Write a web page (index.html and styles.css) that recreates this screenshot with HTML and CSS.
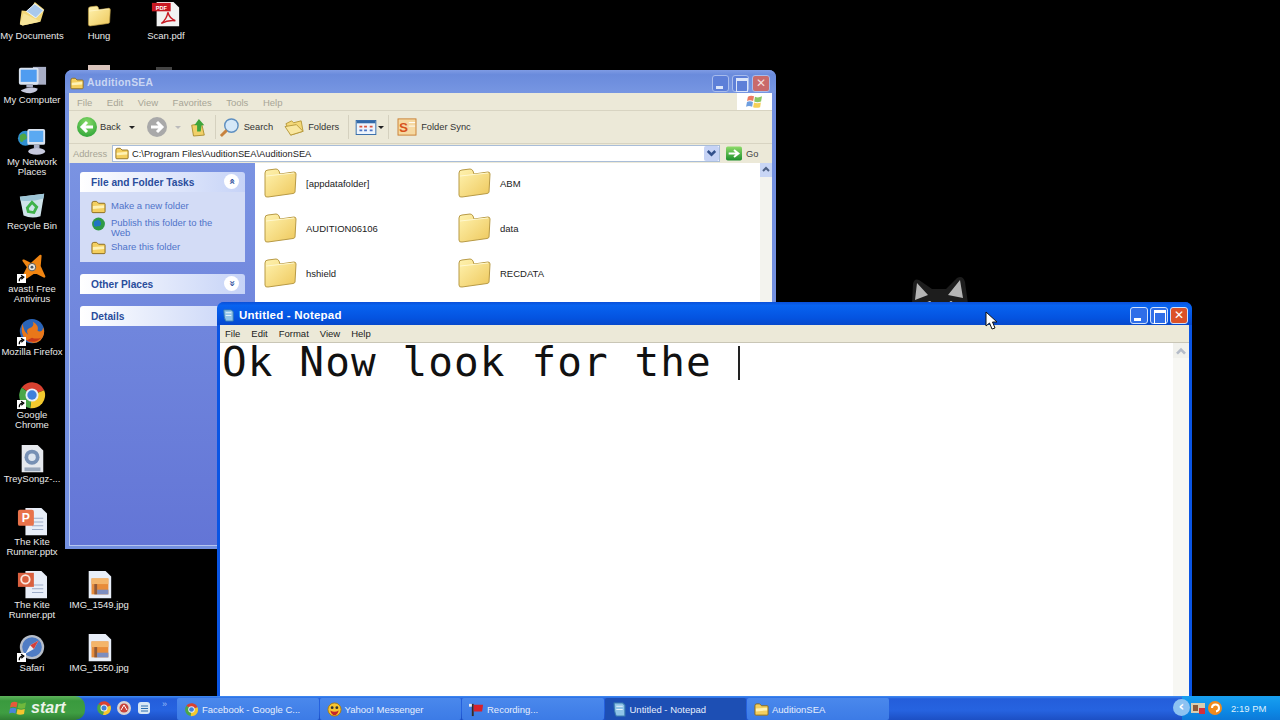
FILE: index.html
```html
<!DOCTYPE html>
<html lang="en">
<head>
<meta charset="utf-8">
<title>Windows XP desktop</title>
<link rel="stylesheet" href="styles.css">
</head>
<body>
<svg class="defs" width="0" height="0" aria-hidden="true">
  <defs>
    <linearGradient id="fg" x1="0" y1="0" x2="1" y2="1"><stop offset="0" stop-color="#fff3b0"/><stop offset="1" stop-color="#eec85c"/></linearGradient>
    <linearGradient id="gb" x1="0" y1="0" x2="0" y2="1"><stop offset="0" stop-color="#8edc6a"/><stop offset="1" stop-color="#1c8f2c"/></linearGradient>
    <symbol id="folder" viewBox="0 0 34 30">
      <path d="M2 5 Q2 2 5 2 L13 1 Q15 1 16 3 L17 6 L31 4 Q33 4 33 6 L32 24 Q32 25 30 25.500 L5 29 Q2 29.500 2 27 Z" fill="url(#fg)" stroke="#b89a45"/>
      <path d="M3 8 L31 5" stroke="#fff8d0" fill="none"/>
    </symbol>
    <symbol id="sfolder" viewBox="0 0 16 14">
      <path d="M1 3 Q1 1 3 1 L6 1 L8 3 L14 3 Q15 3 15 4 L15 12 Q15 13 14 13 L2 13 Q1 13 1 12 Z" fill="#f4cf5f" stroke="#8a6a1c"/>
      <path d="M2 6 L14 5 L14 8 L2 9 Z" fill="#fff2b5"/>
    </symbol>
    <symbol id="mydocs" viewBox="0 0 32 32">
      <path d="M3 24 L5 10 L13 11 L19 1 L29 9 L25 22 L6 26 Z" fill="#f2d777"/>
      <path d="M10 11 L19 3 L28 10 L20 18 Z" fill="#a9c9ec" stroke="#eef6ff"/>
      <path d="M3 25 L7 13 L21 20 L24 22 L6 26 Z" fill="#f7e59a"/>
    </symbol>
    <symbol id="pdf" viewBox="0 0 32 32">
      <path d="M6 1 L24 1 L30 7 L30 27 L6 27 Z" fill="#f1f1f1"/>
      <rect x="1" y="2" width="20" height="9" fill="#c81922"/>
      <text x="11" y="9.500" class="mini" text-anchor="middle">PDF</text>
      <path d="M11 24 Q17 19 18 12 Q20 19 26 21 Q18 20 11 24 Z" fill="none" stroke="#c81922" stroke-width="1.500"/>
    </symbol>
    <symbol id="computer" viewBox="0 0 32 32">
      <rect x="17" y="2" width="14" height="19" fill="#a8aec6"/>
      <rect x="2" y="3" width="21" height="18" rx="2" fill="#d9e2ef"/>
      <rect x="4" y="5" width="17" height="13" fill="#4f9cf0"/>
      <path d="M4 27 Q13 22 22 25 Q22 29 14 30 Q6 30 4 27 Z" fill="#c6c9dd"/>
      <rect x="10" y="21" width="7" height="3" fill="#aab0c8"/>
    </symbol>
    <symbol id="network" viewBox="0 0 32 32">
      <circle cx="9" cy="12" r="8" fill="#2f8fd0"/><path d="M3 9 Q8 5 10 9 Q12 13 7 14 Q5 18 3 14 Z" fill="#4fa746"/>
      <rect x="11" y="2" width="19" height="17" rx="2" fill="#d9e2ef"/>
      <rect x="13" y="4" width="15" height="12" fill="#5aa9f2"/>
      <rect x="18" y="19" width="6" height="4" fill="#aab0c8"/>
      <ellipse cx="21" cy="26" rx="9" ry="3.500" fill="#c6c9dd"/>
    </symbol>
    <symbol id="recycle" viewBox="0 0 32 32">
      <path d="M3 6 L29 3 L25 27 Q15 30 7 26 Z" fill="#cfe3ea"/>
      <path d="M3 6 L29 3 L28 8 Q15 12 4 10 Z" fill="#9dc5d6"/>
      <path d="M11 18 L16 12 L21 17 L18 23 L12 22 Z" fill="none" stroke="#3fb24a" stroke-width="3"/>
    </symbol>
    <symbol id="avast" viewBox="0 0 32 32">
      <path d="M6 26 L12 14 L7 7 L15 11 L25 2 L24 13 L29 24 L19 19 L10 25 Z" fill="#f08512" stroke="#f08512" stroke-width="2.500" stroke-linejoin="round"/>
      <circle cx="16" cy="14" r="4" fill="#ece6dc" stroke="#555"/>
      <circle cx="16" cy="14" r="1.500" fill="#456"/>
    </symbol>
    <symbol id="firefox" viewBox="0 0 32 32">
      <circle cx="16" cy="15" r="13" fill="#2a64b8"/>
      <path d="M6 7 Q3 17 9 24 Q17 31 25 25 Q31 19 28 11 Q27 17 22 15 Q24 9 17 5 Q19 10 13 12 Q9 14 12 19 Q7 16 6 7 Z" fill="#e9771a"/>
      <path d="M10 25 Q19 29 26 22 Q20 24 16 22 Z" fill="#c8381a"/>
    </symbol>
    <symbol id="chrome" viewBox="0 0 32 32">
      <path d="M16 16 L5 8 A14 14 0 0 1 29 11 Z" fill="#d94130"/>
      <path d="M16 16 L29 11 A14 14 0 0 1 14 30 Z" fill="#f3c92e"/>
      <path d="M16 16 L14 30 A14 14 0 0 1 5 8 Z" fill="#4aa648"/>
      <circle cx="16" cy="16" r="7" fill="#e8eef7"/><circle cx="16" cy="16" r="5" fill="#3f7fdc"/>
    </symbol>
    <symbol id="mp3" viewBox="0 0 32 32">
      <path d="M5 1 L22 1 L28 7 L28 30 L5 30 Z" fill="#e6e9ee"/>
      <circle cx="16" cy="14" r="8" fill="#7790b4"/><circle cx="16" cy="14" r="4" fill="#dfe6ef"/>
      <rect x="8" y="25" width="17" height="4" fill="#9aa8bc"/>
    </symbol>
    <symbol id="pptx" viewBox="0 0 32 32">
      <path d="M9 1 L26 1 L32 7 L32 30 L9 30 Z" fill="#e8eef8"/>
      <path d="M16 12 H28 M16 16 H28 M16 20 H28 M16 24 H28" stroke="#98a8c4"/>
      <rect x="1" y="3" width="17" height="17" rx="2" fill="#e8724a"/>
      <text x="9.500" y="16" class="ptxt" text-anchor="middle">P</text>
    </symbol>
    <symbol id="ppt" viewBox="0 0 32 32">
      <path d="M9 1 L26 1 L32 7 L32 30 L9 30 Z" fill="#e8eef8"/>
      <path d="M16 16 H28 M16 20 H28 M16 24 H28" stroke="#98a8c4"/>
      <rect x="1" y="3" width="17" height="15" fill="#d9603f"/>
      <circle cx="9" cy="10" r="4.500" fill="none" stroke="#fbe8df" stroke-width="2"/>
    </symbol>
    <symbol id="jpg" viewBox="0 0 32 32">
      <path d="M5 1 L23 1 L29 7 L29 30 L5 30 Z" fill="#e8eef8"/>
      <rect x="8" y="9" width="18" height="17" fill="#e88c3a"/>
      <rect x="8" y="9" width="18" height="6" fill="#f4b56a"/>
      <rect x="11" y="15" width="3" height="11" fill="#8e5a3a"/>
      <rect x="14" y="21" width="12" height="5" fill="#7c8dbf"/>
    </symbol>
    <symbol id="safari" viewBox="0 0 32 32">
      <circle cx="16" cy="15" r="13" fill="#b7bec9"/>
      <circle cx="16" cy="15" r="10.500" fill="#4f7cc4"/>
      <path d="M23 8 L18 17 L9 22 L14 13 Z" fill="#e6ebf2"/><path d="M23 8 L18 17 L14 13 Z" fill="#d4403a"/>
    </symbol>
    <symbol id="shortcut" viewBox="0 0 10 10">
      <rect width="10" height="10" fill="#fff"/><path d="M2.500 8 Q2.500 4 6 3.500 M4.500 1.500 L7.500 3.500 L4.800 5.800" fill="none" stroke="#000" stroke-width="1.400"/>
    </symbol>
    <symbol id="xpflag" viewBox="0 0 18 16">
      <path d="M2 3 Q5 1 8.500 2.500 L7.500 7.500 Q4 6 1 7.500 Z" fill="#e8593a"/>
      <path d="M9.500 3 Q13 4.500 17 2.500 L16 8 Q12 9.500 8.700 8 Z" fill="#6fb83c"/>
      <path d="M1 8.500 Q4 7 7.300 8.500 L6.500 13.500 Q3 12 0 13.500 Z" fill="#4a86d8"/>
      <path d="M8.500 9 Q12 10.500 15.800 9 L15 14 Q11 15.500 7.500 14 Z" fill="#f5c52f"/>
    </symbol>
    <symbol id="notepadico" viewBox="0 0 14 14">
      <path d="M2 1 L10 1 L12 3 L12 13 L4 13 Q2 10 2 1 Z" fill="#8fc4e8" stroke="#3d7fb0"/>
      <path d="M4 4 H10 M4 7 H10" stroke="#e6f4fc"/>
    </symbol>
    <symbol id="msgr" viewBox="0 0 16 16">
      <circle cx="8" cy="8" r="7" fill="#f7c531" stroke="#a87b12"/><circle cx="5.500" cy="6" r="1.500" fill="#333"/><circle cx="10.500" cy="6" r="1.500" fill="#333"/>
      <path d="M3.500 9 Q8 12 12.500 9 Q11 14 8 14 Q5 14 3.500 9 Z" fill="#c4262a"/>
    </symbol>
    <symbol id="flagrec" viewBox="0 0 16 16">
      <rect x="3" y="2" width="2" height="13" fill="#3a2a24"/><path d="M5 3 L15 3 L14 10 L5 10 Z" fill="#d8212b"/><rect x="0" y="2" width="3" height="3" fill="#eee"/>
    </symbol>
    <symbol id="glogo" viewBox="0 0 12 12"><circle cx="6" cy="6" r="5.500" fill="#2f9a46"/><path d="M2 4 Q6 1 8 4 Q9 8 5 8 Q3 9 2 7 Z" fill="#1f73c4"/></symbol>
  </defs>
</svg>

<main class="desktop">
  <div class="dicon c1 r-docs"><svg class="ico"><use href="#mydocs"/></svg><span>My Documents</span></div>
  <div class="dicon c2 r-docs"><svg class="ico hung"><use href="#folder"/></svg><span>Hung</span></div>
  <div class="dicon c3 r-docs"><svg class="ico"><use href="#pdf"/></svg><span>Scan.pdf</span></div>
  <div class="dicon c1 r-comp"><svg class="ico"><use href="#computer"/></svg><span>My Computer</span></div>
  <div class="dicon c1 r-net"><svg class="ico"><use href="#network"/></svg><span>My Network Places</span></div>
  <div class="dicon c1 r-bin"><svg class="ico"><use href="#recycle"/></svg><span>Recycle Bin</span></div>
  <div class="dicon c1 r-ava"><svg class="ico"><use href="#avast"/></svg><svg class="sc"><use href="#shortcut"/></svg><span>avast! Free Antivirus</span></div>
  <div class="dicon c1 r-fox"><svg class="ico"><use href="#firefox"/></svg><svg class="sc"><use href="#shortcut"/></svg><span>Mozilla Firefox</span></div>
  <div class="dicon c1 r-chr"><svg class="ico"><use href="#chrome"/></svg><svg class="sc"><use href="#shortcut"/></svg><span>Google Chrome</span></div>
  <div class="dicon c1 r-mp3"><svg class="ico"><use href="#mp3"/></svg><span>TreySongz-...</span></div>
  <div class="dicon c1 r-pptx"><svg class="ico"><use href="#pptx"/></svg><span>The Kite Runner.pptx</span></div>
  <div class="dicon c1 r-ppt"><svg class="ico"><use href="#ppt"/></svg><span>The Kite Runner.ppt</span></div>
  <div class="dicon c2 r-ppt"><svg class="ico"><use href="#jpg"/></svg><span>IMG_1549.jpg</span></div>
  <div class="dicon c1 r-saf"><svg class="ico"><use href="#safari"/></svg><svg class="sc"><use href="#shortcut"/></svg><span>Safari</span></div>
  <div class="dicon c2 r-saf"><svg class="ico"><use href="#jpg"/></svg><span>IMG_1550.jpg</span></div>

  <svg class="peek" viewBox="0 0 110 6"><rect x="22" width="22" height="6" fill="#d9c4bc"/><rect x="90" y="2" width="16" height="4" fill="#444"/></svg>

  <svg class="cat" viewBox="0 0 60 28">
    <path d="M2 28 L3 8 Q4 2 9 4 L22 13 L36 13 L47 2 Q53 -1 55 6 L58 28 Z" fill="#1d1d1d"/>
    <path d="M5 24 L7 7 L18 19 Z M38 19 L50 4 L53 22 Z" fill="#b5b5b5"/>
    <path d="M12 28 L20 25 L24 28 Z M36 28 L41 25 L46 28 Z" fill="#d8d8d8"/>
  </svg>

  <section class="win explorer">
    <header class="title">
      <svg class="tico"><use href="#sfolder"/></svg>
      <h1>AuditionSEA</h1>
      <div class="ctrls">
        <b class="cb min"></b><b class="cb max"></b><b class="cb cls">✕</b>
      </div>
    </header>
    <nav class="menu">
      <span>File</span><span>Edit</span><span>View</span><span>Favorites</span><span>Tools</span><span>Help</span>
      <div class="xpbox"><svg class="xpico"><use href="#xpflag"/></svg></div>
    </nav>
    <div class="toolbar">
      <div class="roundbtn back"><svg viewBox="0 0 20 20"><path d="M16 10 H6 M10 5 L5 10 L10 15" fill="none" stroke="#fff" stroke-width="3"/></svg></div>
      <span class="tbt tback">Back</span><i class="caret"></i>
      <div class="roundbtn fwd"><svg viewBox="0 0 20 20"><path d="M4 10 H14 M10 5 L15 10 L10 15" fill="none" stroke="#fff" stroke-width="3"/></svg></div>
      <i class="caret dim"></i>
      <svg class="tbi up" viewBox="0 0 20 22"><path d="M3 9 L14 7 L17 20 L5 21 Z" fill="#f1d068" stroke="#a98b2c"/><path d="M11 2 L17 9 L14 9 L13 16 L9 16 L9 9 L6 9 Z" fill="#3da53a"/></svg>
      <i class="sep s1"></i>
      <svg class="tbi search" viewBox="0 0 22 22"><circle cx="13" cy="9" r="7" fill="#d5e8f8" stroke="#5e8fc0" stroke-width="1.500"/><path d="M8 14 L2 20" stroke="#c7823d" stroke-width="3"/></svg>
      <span class="tbt">Search</span>
      <svg class="tbi folders" viewBox="0 0 22 20"><path d="M2 6 L8 3 L10 5 L18 3 L20 14 L7 18 Z" fill="#f4d878" stroke="#b79a3c"/><path d="M1 9 L13 7 L20 14 L7 18 Z" fill="#f9e7a0" stroke="#b79a3c"/></svg>
      <span class="tbt">Folders</span>
      <i class="sep s2"></i>
      <svg class="tbi views" viewBox="0 0 22 16"><rect x=".5" y=".5" width="21" height="15" fill="#eef4fb" stroke="#3169a8"/><rect x="1" y="1" width="20" height="2.500" fill="#3169a8"/><path d="M4 6 h3 v2 h-3 z M9 6 h3 v2 h-3 z M15 6 h3 v2 h-3 z" fill="#d9533d"/><path d="M4 10 h3 v2 h-3 z M9 10 h3 v2 h-3 z M15 10 h3 v2 h-3 z" fill="#4b74c4"/></svg>
      <i class="caret near"></i>
      <i class="sep s3"></i>
      <svg class="tbi sync" viewBox="0 0 22 20"><rect x="1" y="1" width="20" height="18" fill="#f6d9a2" stroke="#c77b2d"/><text x="7" y="15" class="stxt" text-anchor="middle">S</text><path d="M13 5 H20 M13 9 H20" stroke="#fff"/></svg>
      <span class="tbt">Folder Sync</span>
    </div>
    <div class="addr">
      <span class="alabel">Address</span>
      <div class="afield">
        <svg class="asico"><use href="#sfolder"/></svg>
        <span class="apath">C:\Program Files\AuditionSEA\AuditionSEA</span>
        <b class="adrop"><svg viewBox="0 0 12 12"><path d="M3 4 L6 7 L9 4" fill="none" stroke="#33518c" stroke-width="2"/></svg></b>
      </div>
      <svg class="goico" viewBox="0 0 18 16"><rect width="18" height="16" rx="2" fill="url(#gb)"/><path d="M3 8 H13 M9 4 L14 8 L9 12" fill="none" stroke="#fff" stroke-width="2.200"/></svg>
      <span class="golabel">Go</span>
    </div>
    <div class="content">
      <aside class="side">
        <div class="tbox">
          <h2>File and Folder Tasks <b class="chev">«</b></h2>
          <ul>
            <li><svg class="lico"><use href="#sfolder"/></svg><span>Make a new folder</span></li>
            <li><svg class="lico"><use href="#glogo"/></svg><span>Publish this folder to the Web</span></li>
            <li><svg class="lico"><use href="#sfolder"/></svg><span>Share this folder</span></li>
          </ul>
        </div>
        <div class="tbox"><h2>Other Places <b class="chev">»</b></h2></div>
        <div class="tbox"><h2>Details</h2></div>
      </aside>
      <div class="files">
        <div class="file"><svg class="fico"><use href="#folder"/></svg><span>[appdatafolder]</span></div>
        <div class="file"><svg class="fico"><use href="#folder"/></svg><span>ABM</span></div>
        <div class="file"><svg class="fico"><use href="#folder"/></svg><span>AUDITION06106</span></div>
        <div class="file"><svg class="fico"><use href="#folder"/></svg><span>data</span></div>
        <div class="file"><svg class="fico"><use href="#folder"/></svg><span>hshield</span></div>
        <div class="file"><svg class="fico"><use href="#folder"/></svg><span>RECDATA</span></div>
      </div>
      <div class="vscroll"><b class="sbtn"><svg viewBox="0 0 12 12"><path d="M3 8 L6 5 L9 8" fill="none" stroke="#4d6185" stroke-width="2"/></svg></b></div>
    </div>
  </section>

  <section class="win notepad">
    <header class="title">
      <svg class="tico"><use href="#notepadico"/></svg>
      <h1>Untitled - Notepad</h1>
      <div class="ctrls">
        <b class="cb min"></b><b class="cb max"></b><b class="cb cls">✕</b>
      </div>
    </header>
    <nav class="menu">
      <span>File</span><span>Edit</span><span>Format</span><span>View</span><span>Help</span>
    </nav>
    <div class="edit">
      <p class="typed">Ok Now look for the <i class="caretline"></i></p>
      <div class="vscroll light"><b class="sbtn"><svg viewBox="0 0 12 12"><path d="M3 8 L6 5 L9 8" fill="none" stroke="#b5bcc8" stroke-width="2"/></svg></b></div>
    </div>
  </section>

  <svg class="pointer" viewBox="0 0 14 20"><path d="M1 1 L1 15 L4.500 12 L7 18 L10 17 L7.500 11 L12 11 Z" fill="#fff" stroke="#111"/></svg>
</main>

<footer class="taskbar">
  <div class="start"><svg class="sflag"><use href="#xpflag"/></svg><span>start</span></div>
  <div class="quick">
    <svg class="qi"><use href="#chrome"/></svg>
    <svg class="qi" viewBox="0 0 16 16"><circle cx="8" cy="8" r="7" fill="#d9d4d4"/><circle cx="8" cy="8" r="4.500" fill="#c9443c"/><path d="M5 10 L8 5 L11 10" stroke="#fff" fill="none"/></svg>
    <svg class="qi" viewBox="0 0 16 16"><rect x="2" y="2" width="12" height="12" rx="3" fill="#d8e7f5"/><path d="M5 6 H12 M5 8.500 H12 M5 11 H12" stroke="#2c6fb0" stroke-width="1.200"/></svg>
    <span class="more">»</span>
  </div>
  <div class="tasks">
    <div class="task"><svg class="ti"><use href="#chrome"/></svg><span>Facebook - Google C...</span></div>
    <div class="task"><svg class="ti"><use href="#msgr"/></svg><span>Yahoo! Messenger</span></div>
    <div class="task"><svg class="ti"><use href="#flagrec"/></svg><span>Recording...</span></div>
    <div class="task active"><svg class="ti"><use href="#notepadico"/></svg><span>Untitled - Notepad</span></div>
    <div class="task"><svg class="ti"><use href="#sfolder"/></svg><span>AuditionSEA</span></div>
  </div>
  <div class="tray">
    <b class="trayback">‹</b>
    <svg class="tri" viewBox="0 0 16 16"><rect x="1" y="3" width="14" height="10" fill="#d8cdb0"/><rect x="3" y="5" width="5" height="6" fill="#8a5a3a"/><rect x="9" y="8" width="6" height="6" fill="#d32f3a"/></svg>
    <svg class="tri" viewBox="0 0 16 16"><circle cx="8" cy="8" r="7" fill="#f08a1c"/><path d="M5 8 A3.500 3.500 0 1 1 9 11.500" fill="none" stroke="#fff" stroke-width="2"/></svg>
    <time>2:19 PM</time>
  </div>
</footer>
</body>
</html>
```
FILE: styles.css
```css
* { box-sizing: border-box; }
html, body { margin: 0; height: 100%; overflow: hidden; background: #000; }
body {
  width: 1280px; height: 720px; display: flex; flex-direction: column;
  font-family: "Liberation Sans", sans-serif; font-size: 9.500px; color: #000;
}
.defs { position: absolute; }
.mini { font: bold 6px "Liberation Sans", sans-serif; fill: #fff; }
.ptxt { font: bold 13px "Liberation Sans", sans-serif; fill: #fff; }
.stxt { font: bold 15px "Liberation Sans", sans-serif; fill: #d8541c; }

.desktop { position: relative; flex: 1; overflow: hidden; background: #000; }

/* desktop icons sit on a free canvas */
.dicon {
  position: absolute; width: 66px; display: flex; flex-direction: column; align-items: center;
  color: #e9e9e9; text-align: center; line-height: 10.300px; font-size: 9.500px;
}
.ico { width: 30px; height: 30px; display: block; }
.hung { width: 24px; height: 24px; margin: 3px; }
.sc { position: absolute; left: 18px; width: 9px; height: 9px; top: 20px; }
.c1 { left: -1px; } .c2 { left: 66px; } .c3 { left: 133px; }
.r-docs { top: 1px; } .r-comp { top: 65px; } .r-net { top: 127px; } .r-bin { top: 191px; }
.r-ava { top: 254px; } .r-fox { top: 317px; } .r-chr { top: 380px; } .r-mp3 { top: 444px; }
.r-pptx { top: 507px; } .r-ppt { top: 570px; } .r-saf { top: 633px; }

.peek { position: absolute; left: 66px; top: 65px; width: 110px; height: 6px; }
.cat { position: absolute; left: 910px; top: 276px; width: 60px; height: 28px; }
.pointer { position: absolute; left: 985px; top: 311px; width: 14px; height: 20px; }

/* windows */
.win { position: absolute; display: flex; flex-direction: column; border-radius: 7px 7px 0 0; }
.explorer { left: 65px; top: 70px; width: 711px; height: 479px; background: #7390e0; padding: 0 4px 3px; }
.notepad { left: 217px; top: 302px; width: 975px; height: 394px; background: #0a55e4; padding: 0 3px; }

.title { height: 23px; display: flex; align-items: center; flex: none; margin: 0 -4px; padding: 4px 6px 0 5px; border-radius: 7px 7px 0 0; }
.explorer .title { background: linear-gradient(#7f9be4, #6a8bdc 20%, #7796e2); color: #d6e0f7; }
.notepad .title { background: linear-gradient(#0a4fd8, #0863f0 15%, #0453e0 70%, #0749cc); color: #fff; margin: 0 -3px; padding: 4px 4px 0 5px; }
.title h1 { margin: 0; font: bold 11.500px/1 "Liberation Sans", sans-serif; letter-spacing: .2px; }
.explorer .title h1 { color: #c9d6f3; font-size: 10.300px; letter-spacing: .3px; }
.tico { width: 14px; height: 13px; margin-right: 3px; flex: none; }
.notepad .tico { margin-right: 4px; width: 13px; }
.ctrls { margin-left: auto; display: flex; gap: 2px; margin-top: -1px; }
.cb { width: 18px; height: 17px; border-radius: 3px; border: 1px solid #fff; position: relative; display: flex; align-items: center; justify-content: center; font: bold 12px/1 "DejaVu Sans", sans-serif; color: #fff; }
.explorer .cb { border-color: #a8bcec; background: #5d7fd8; width: 17px; }
.explorer .cb.cls { background: #c96a6a; color: #f3dede; width: 18px; }
.explorer .ctrls { gap: 3px; }
.notepad .cb { background: #2f6ee8; border-color: #cfe0fb; }
.notepad .cb.cls { background: #dc5127; }
.min::after { content: ""; position: absolute; left: 3px; bottom: 2px; width: 7px; height: 3px; background: #fff; }
.max::after { content: ""; position: absolute; left: 3px; top: 2px; width: 10px; height: 10px; border: 1px solid #fff; border-top-width: 3px; }
.explorer .min::after { background: #dbe5f9; } .explorer .max::after { border-color: #dbe5f9; }

.menu { display: flex; align-items: center; background: #ece9d8; flex: none; }
.menu span { display: block; }
.explorer .menu { height: 18px; padding: 1px 0 0 8px; gap: 14.500px; color: #a7a596; border-bottom: 1px solid #d8d4c2; position: relative; }
.notepad .menu { height: 18px; padding-left: 5px; gap: 11px; color: #222; border-bottom: 1px solid #c9c6b6; }
.xpbox { margin-left: auto; width: 35px; height: 17px; background: #fff; display: flex; align-items: center; justify-content: center; align-self: flex-start; margin-top: -1px; }
.xpico { width: 17px; height: 15px; opacity: .8; }

.toolbar { height: 33px; background: #ece9d8; display: flex; align-items: center; padding-left: 8px; flex: none; color: #333; border-bottom: 1px solid #d8d4c2; font-size: 9.300px; }
.roundbtn { width: 20px; height: 20px; border-radius: 50%; display: flex; flex: none; }
.back { background: radial-gradient(circle at 50% 30%, #8bdc6a, #1d9a2e); }
.fwd { background: #a9a9a9; margin-left: 12px; }
.tbt { color: #333; }
.tback { margin-left: 3px; }
.caret { width: 0; height: 0; border: 3px solid transparent; border-top: 3px solid #222; border-bottom: 0; margin-left: 8px; }
.caret.dim { border-top-color: #bbb; margin-left: 8px; }
.caret.near { margin-left: 1px; }
.tbi { flex: none; }
.up { width: 18px; height: 20px; margin-left: 8px; }
.sep { width: 1px; height: 24px; background: #d5d1bf; flex: none; }
.s1 { margin: 0 3px 0 8px; }
.s2 { margin: 0 6px 0 9px; }
.s3 { margin: 0 8px 0 4px; }
.search { width: 21px; height: 21px; margin-right: 4px; }
.folders { width: 21px; height: 19px; margin: 0 3px 0 11px; }
.views { width: 22px; height: 15px; }
.sync { width: 20px; height: 18px; margin-right: 4px; }

.addr { height: 19px; background: #ece9d8; display: flex; align-items: center; flex: none; font-size: 9.300px; }
.alabel { width: 43px; color: #a7a596; padding-left: 4px; }
.afield { width: 608px; height: 17px; background: #fff; border: 1px solid #a9bdd8; display: flex; align-items: center; padding-left: 2px; }
.asico { width: 14px; height: 13px; margin-right: 3px; }
.apath { color: #222; }
.adrop { margin-left: auto; width: 15px; height: 15px; background: #c6d3f5; border-radius: 2px; display: block; }
.adrop svg { display: block; }
.goico { width: 16px; height: 15px; margin-left: 6px; flex: none; }
.golabel { margin-left: 4px; color: #444; }

.content { flex: 1; display: flex; min-height: 0; background: #fff; border-left: 1px solid #b5c5f0; border-bottom: 1px solid #b5c5f0; }
.side { width: 185px; flex: none; padding: 9px 11px 0 10px; display: flex; flex-direction: column; gap: 12px; background: linear-gradient(#7a93e2, #6375d6); }
.tbox { width: 165px; }
.tbox h2 { margin: 0; height: 20px; padding: 3px 0 0 11px; font: bold 10.200px/1 "Liberation Sans", sans-serif; color: #2a4d9c; background: linear-gradient(90deg, #fff, #c6d3f7); border-radius: 3px 3px 0 0; display: flex; align-items: center; }
.chev { margin-left: auto; margin-right: 6px; margin-top: -4px; width: 15px; height: 15px; border-radius: 50%; background: #fff; font: bold 10px/13px "DejaVu Sans", sans-serif; text-align: center; transform: rotate(90deg); color: #2a4d9c; }
.tbox ul { list-style: none; margin: 0; padding: 9px 8px 8px 11px; background: #d3dcf6; height: 70px; }
.tbox li { display: flex; color: #4f73c9; line-height: 10px; margin-bottom: 4px; }
.tbox li span { max-width: 110px; }
.lico { width: 15px; height: 14px; flex: none; margin-right: 5px; margin-top: -1px; }
.files { flex: 1; display: grid; grid-template-columns: 194px 1fr; grid-auto-rows: 45px; padding: 5px 0 0 8px; align-content: start; }
.file { display: flex; align-items: center; height: 30px; color: #222; }
.fico { width: 34px; height: 30px; margin-right: 9px; flex: none; }
.vscroll { width: 12px; flex: none; background: #f3f3ee; }
.sbtn { display: block; width: 12px; height: 14px; background: #c9d6f5; }
.sbtn svg { display: block; }

.edit { flex: 1; background: #fff; display: flex; min-height: 0; position: relative; }
.typed { margin: 0; flex: 1; padding: 0 0 0 2px; font: 41px/38px "DejaVu Sans Mono", "Liberation Mono", monospace; letter-spacing: 1.100px; white-space: pre; color: #111; }
.caretline { display: inline-block; width: 2px; height: 34px; background: #222; vertical-align: -4px; }
.vscroll.light { width: 16px; background: #f7f7f3; }
.vscroll.light .sbtn { width: 16px; height: 15px; background: #f1f1ec; }

/* taskbar */
.taskbar { height: 24px; flex: none; display: flex; background: linear-gradient(#3f8cf3 0, #245edb 12%, #2663e0 60%, #1c4fc4); color: #e6eefc; }
.start { width: 85px; display: flex; align-items: center; padding-left: 9px; background: linear-gradient(#5fb35c, #3a9a3e 20%, #3f9e42 70%, #2f7d33); border-radius: 0 10px 10px 0; flex: none; }
.sflag { width: 18px; height: 16px; margin-right: 4px; flex: none; }
.start span { font: italic bold 16px/1 "Liberation Sans", sans-serif; color: #ecf4ea; }
.quick { width: 92px; flex: none; display: flex; align-items: center; padding-left: 11px; gap: 4px; position: relative; }
.qi { width: 16px; height: 16px; flex: none; }
.more { color: #9dbdf5; font-size: 9px; margin: -8px 0 0 6px; }
.tasks { display: flex; flex: 1; padding-top: 2px; gap: 1px; }
.task { width: 141.500px; height: 22px; display: flex; align-items: center; padding-left: 7px; background: linear-gradient(#4a88ec, #3c7be6); border-radius: 2px; }
.task.active { background: #1d4fb4; }
.ti { width: 15px; height: 15px; margin-right: 3px; flex: none; }
.tray { width: 98px; flex: none; display: flex; align-items: center; background: linear-gradient(#18a0f0, #0d8ae6 60%, #0c79d8); position: relative; padding-left: 8px; gap: 1px; }
.trayback { position: absolute; left: -9px; top: 3px; width: 17px; height: 17px; border-radius: 50%; background: #8cc2f2; color: #fff; font: bold 14px/15px "DejaVu Sans", sans-serif; text-align: center; }
.tri { width: 16px; height: 16px; flex: none; }
.tray time { margin-left: 7px; white-space: nowrap; color: #dff0fc; }
```
